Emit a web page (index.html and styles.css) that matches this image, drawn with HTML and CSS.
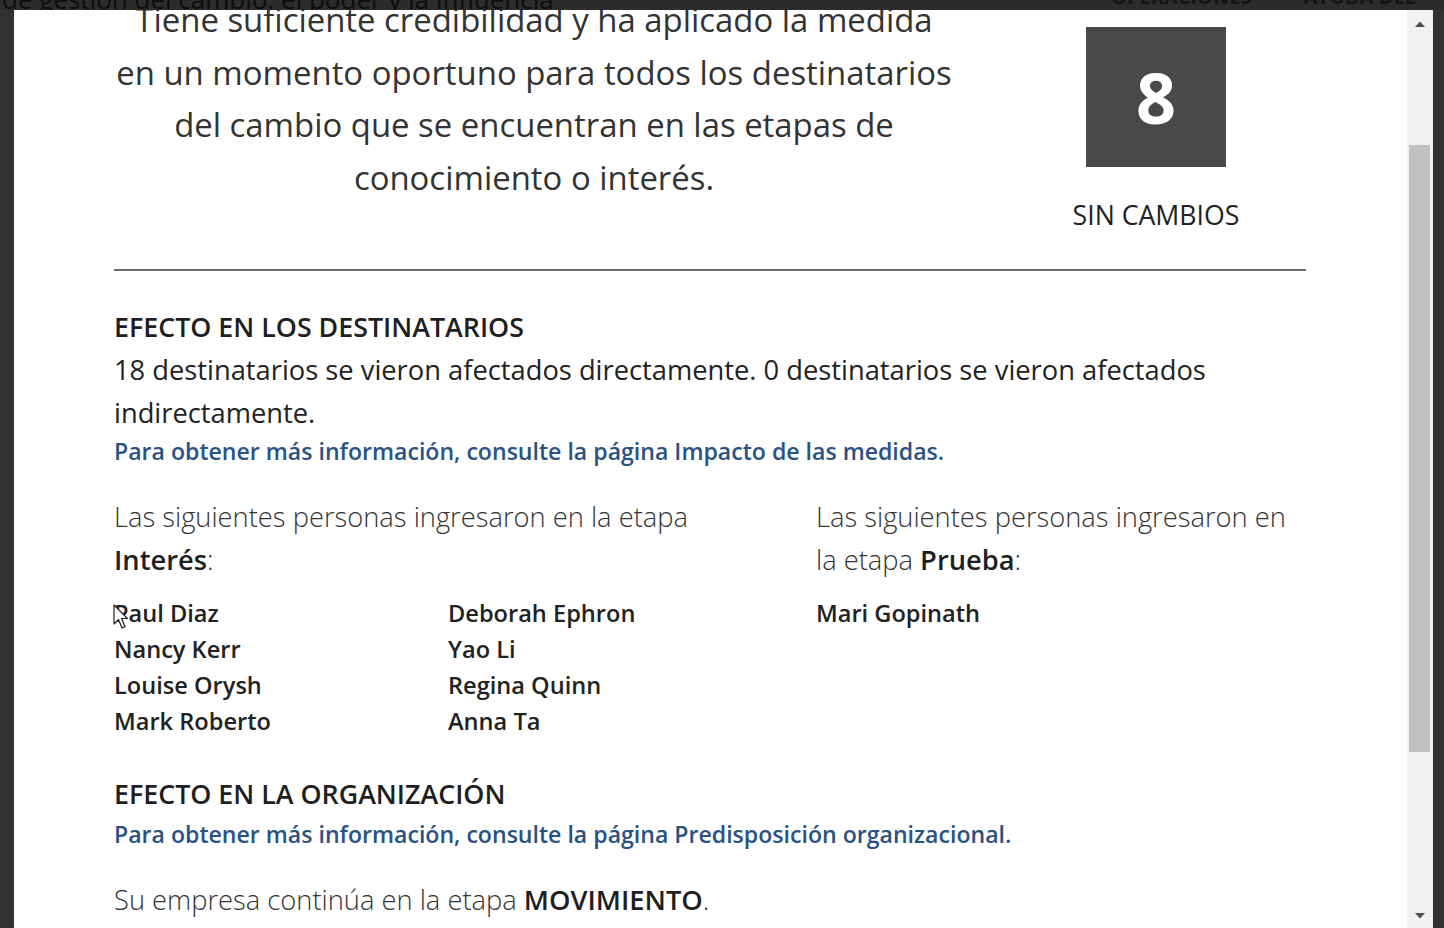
FILE: index.html
```html
<!DOCTYPE html>
<html lang="es">
<head>
<meta charset="utf-8">
<title>Resultado de la medida</title>
<link rel="stylesheet" href="styles.css">
</head>
<body>
<div class="page-behind">
  <div class="page-title">de gestión del cambio: el poder y la influencia</div>
  <div class="page-nav"><span>OPERACIONES</span><span>AYUDA DEL</span></div>
</div>

<div class="modal">
  <div class="modal-body">
    <div class="content">
      <div class="result-row">
        <p class="result-text">Tiene suficiente credibilidad y ha aplicado la medida en un momento oportuno para todos los destinatarios del cambio que se encuentran en las etapas de conocimiento o interés.</p>
        <div class="score">
          <div class="score-box">8</div>
          <div class="score-label">SIN CAMBIOS</div>
        </div>
      </div>

      <hr class="divider">

      <h3 class="section-title">EFECTO EN LOS DESTINATARIOS</h3>
      <p class="body-text">18 destinatarios se vieron afectados directamente. 0 destinatarios se vieron afectados indirectamente.</p>
      <a class="info-link" href="#">Para obtener más información, consulte la página Impacto de las medidas.</a>

      <div class="stages">
        <div class="stage stage-wide">
          <p class="stage-intro">Las siguientes personas ingresaron en la etapa <b>Interés</b>:</p>
          <ul class="names names-two">
            <li>Paul Diaz</li>
            <li>Deborah Ephron</li>
            <li>Nancy Kerr</li>
            <li>Yao Li</li>
            <li>Louise Orysh</li>
            <li>Regina Quinn</li>
            <li>Mark Roberto</li>
            <li>Anna Ta</li>
          </ul>
        </div>
        <div class="stage">
          <p class="stage-intro">Las siguientes personas ingresaron en la etapa <b>Prueba</b>:</p>
          <ul class="names">
            <li>Mari Gopinath</li>
          </ul>
        </div>
      </div>

      <h3 class="section-title section-org">EFECTO EN LA ORGANIZACIÓN</h3>
      <a class="info-link info-link-tight" href="#">Para obtener más información, consulte la página Predisposición organizacional.</a>
      <p class="stage-intro company">Su empresa continúa en la etapa <b>MOVIMIENTO</b>.</p>
    </div>
  </div>
  <div class="scrollbar">
    <div class="scroll-arrow"><svg width="12" height="8" viewBox="0 0 12 8"><path d="M1 7 L6 1.5 L11 7 Z" fill="#505050"/></svg></div>
    <div class="scroll-track">
      <div class="scroll-gap"></div>
      <div class="scroll-thumb"></div>
    </div>
    <div class="scroll-arrow"><svg width="12" height="8" viewBox="0 0 12 8"><path d="M1 1 L6 6.5 L11 1 Z" fill="#505050"/></svg></div>
  </div>
  <svg class="cursor" width="16" height="26" viewBox="0 0 16 26"><path d="M1 1 L1 20 L5.5 15.5 L9 24 L12 22.7 L8.6 14.5 L14.5 14.5 Z" fill="#fff" stroke="#222" stroke-width="1.2" stroke-linejoin="round"/></svg>
</div>
</body>
</html>
```

FILE: styles.css
```css
* { box-sizing: border-box; }

html, body {
  margin: 0;
  padding: 0;
  height: 100%;
}

body {
  background: #323232;
  font-family: "Open Sans", "Liberation Sans", sans-serif;
  color: #2a2a2a;
  overflow: hidden;
}

.page-behind {
  height: 10px;
  overflow: hidden;
  display: flex;
  justify-content: space-between;
  background: #2c2c2c;
}

.page-title {
  font-size: 26px;
  line-height: 26px;
  margin-top: -14px;
  padding-left: 2px;
  color: #0d0d0d;
  white-space: nowrap;
}

.page-nav {
  display: flex;
  gap: 52px;
  font-size: 20px;
  line-height: 20px;
  margin-top: -13px;
  margin-right: 28px;
  color: #141414;
  font-weight: 700;
}

.modal {
  position: absolute;
  left: 14px;
  top: 10px;
  right: 11px;
  bottom: 0;
  background: #ffffff;
  display: flex;
  overflow: hidden;
}

.modal-body {
  flex: 1;
  overflow: hidden;
}

.content {
  margin-top: -16px;
  padding: 0 101px 0 100px;
}

.result-row {
  display: grid;
  grid-template-columns: 840px 1fr;
}

.result-text {
  margin: 0;
  font-size: 32.9px;
  line-height: 52.5px;
  text-align: center;
  color: #333;
}

.score {
  padding-left: 52px;
  display: flex;
  flex-direction: column;
  align-items: center;
}

.score-box {
  margin-top: 33px;
  width: 140px;
  height: 140px;
  background: #4a4849;
  color: #fff;
  font-size: 70px;
  font-weight: 700;
  display: flex;
  align-items: center;
  justify-content: center;
}

.score-label {
  margin-top: 30px;
  font-size: 26.7px;
  line-height: 36px;
  color: #222;
}

.divider {
  margin: 36px 0 0;
  border: 0;
  height: 2px;
  background: #6b6b6b;
}

.section-title {
  margin: 38px 0 0;
  font-size: 26.8px;
  line-height: 36px;
  font-weight: 600;
  color: #1f1f1f;
}

.body-text {
  margin: 3px 0 0;
  font-size: 27.3px;
  line-height: 43px;
  color: #222;
}

.info-link {
  display: block;
  margin-top: 2px;
  font-size: 23.1px;
  line-height: 30px;
  font-weight: 600;
  color: #2a5283;
  text-decoration: none;
}

.info-link-tight {
  margin-top: 7px;
}

.stages {
  margin-top: 29px;
  display: grid;
  grid-template-columns: 668px 1fr;
  gap: 34px;
}

.stage-intro {
  margin: 0;
  font-size: 27.3px;
  line-height: 43px;
  font-weight: 300;
  color: #333;
}

.stage-intro b {
  font-weight: 600;
  color: #1f1f1f;
}

.names {
  list-style: none;
  margin: 14px 0 0;
  padding: 0;
  font-size: 23.6px;
  line-height: 36px;
  font-weight: 600;
  color: #222;
}

.names-two {
  display: grid;
  grid-template-columns: 334px 334px;
}

.section-org {
  margin-top: 37px;
}

.company {
  margin-top: 29px;
}

.scrollbar {
  width: 26px;
  background: #f1f1f1;
  display: flex;
  flex-direction: column;
}

.scroll-arrow {
  height: 26px;
  display: flex;
  align-items: center;
  justify-content: center;
  padding-top: 2px;
}

.scroll-track {
  flex: 1;
  display: flex;
  flex-direction: column;
  padding: 0 3px 0 2px;
}

.scroll-gap {
  height: 109px;
}

.scroll-thumb {
  height: 607px;
  background: #c1c1c1;
}

.cursor {
  position: absolute;
  left: 99px;
  top: 594px;
}
```
